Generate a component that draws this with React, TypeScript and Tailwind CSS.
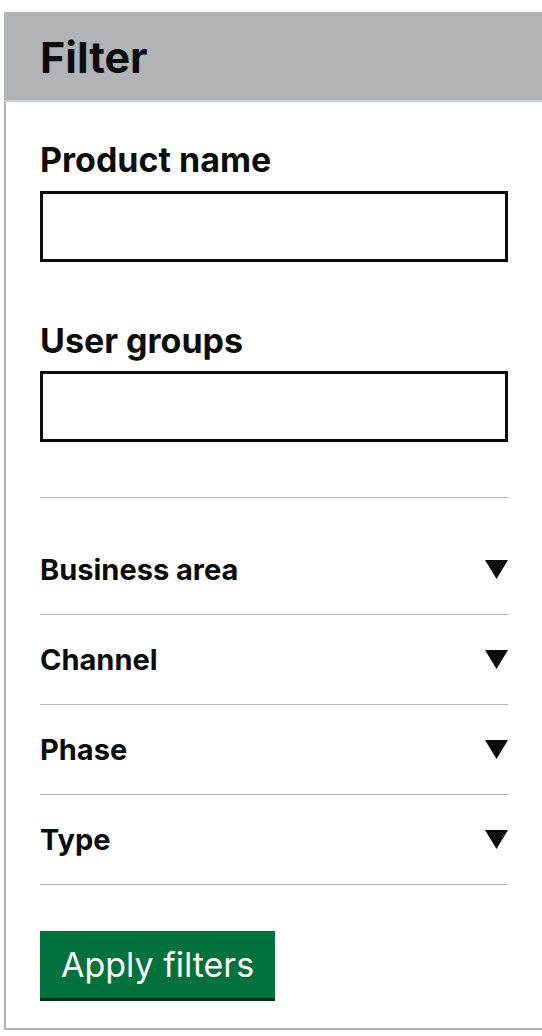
const filters = ['Business area', 'Channel', 'Phase', 'Type'];

function Caret() {
  return (
    <svg width="23" height="19" viewBox="0 0 23 19" aria-hidden="true">
      <polygon points="0,0 23,0 11.5,19" fill="#0b0c0c" />
    </svg>
  );
}

export default function App() {
  return (
    <div className="pt-[12px] pl-[4px] text-[#0b0c0c]" style={{ fontFamily: 'Inter, "Liberation Sans", sans-serif' }}>
      <div className="border-l-2 border-b-2 border-[#b1b4b6]">
        <div className="-ml-[2px] h-[90px] bg-[#b1b4b6] border-b-2 border-[#cfd0d1] flex items-center pl-[36px] pt-[2px]">
          <h2 className="text-[43px] leading-none font-bold">Filter</h2>
        </div>

        <div className="pl-[34px] pr-[34px] pb-[30px]">
          <label className="block mt-[41px] text-[34px] leading-none font-bold">Product name</label>
          <input className="block mt-[14px] w-full h-[71px] border-[3px] border-[#0b0c0c] bg-white outline-none" type="text" />

          <label className="block mt-[62px] text-[34px] leading-none font-bold">User groups</label>
          <input className="block mt-[13px] w-full h-[71px] border-[3px] border-[#0b0c0c] bg-white outline-none" type="text" />

          <div className="mt-[55px] border-t border-[#b1b4b6]" />

          <div className="mt-[27px]">
            {filters.map((name) => (
              <div key={name} className="h-[90px] border-b border-[#b1b4b6] flex items-center justify-between pb-[1px]">
                <span className="text-[29px] leading-none font-bold">{name}</span>
                <Caret />
              </div>
            ))}
          </div>

          <button className="mt-[46px] h-[67px] px-[21px] bg-[#00703c] text-white text-[34px] leading-none shadow-[0_3px_0_#002d18]">
            Apply filters
          </button>
        </div>
      </div>
    </div>
  );
}
